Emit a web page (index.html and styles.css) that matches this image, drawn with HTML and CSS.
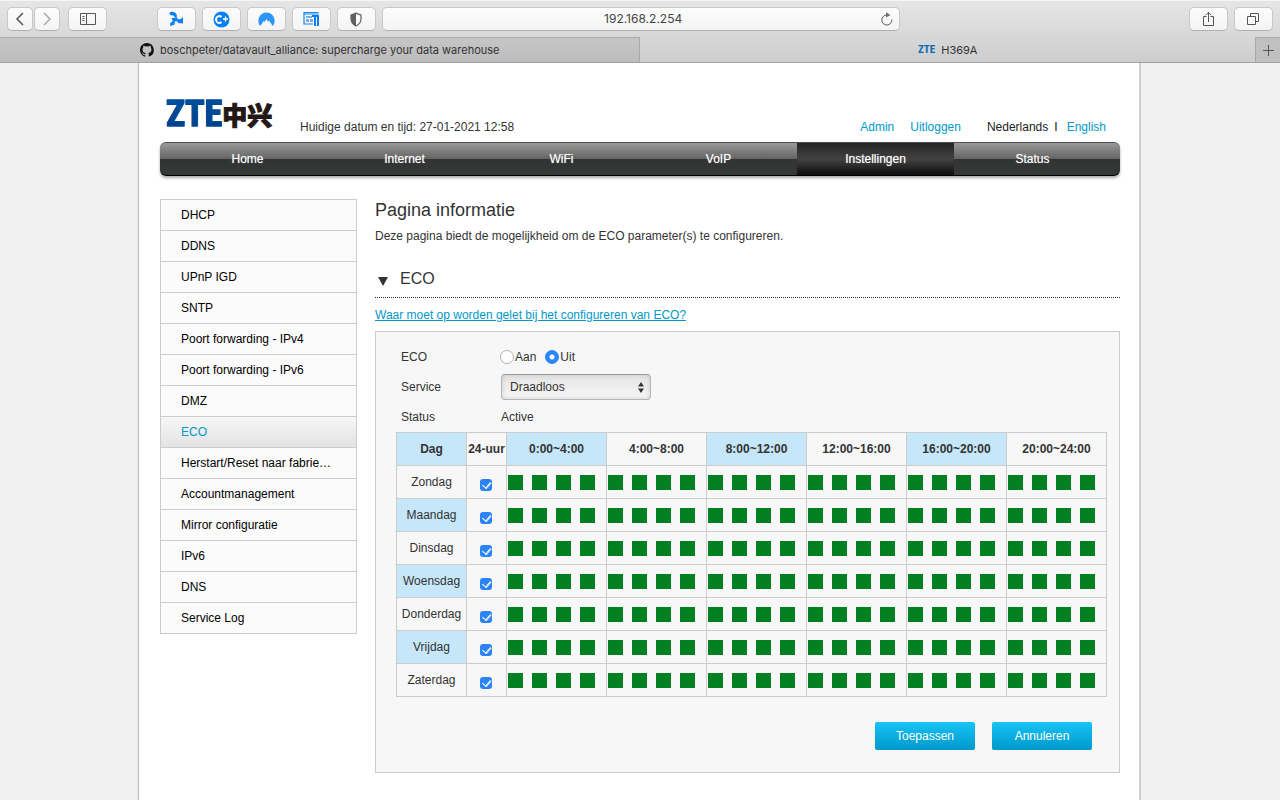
FILE: index.html
```html
<!DOCTYPE html>
<html lang="nl">
<head>
<meta charset="utf-8">
<meta name="viewport" content="width=device-width, initial-scale=1">
<title>H369A</title>
<link rel="stylesheet" href="styles.css">
</head>
<body>
<div class="browser">
  <div class="toolbar">
    <div class="pair">
      <button class="tool tool-small" type="button" aria-label="Back"><svg width="20" height="20" viewBox="0 0 20 20"><path d="M13 4 7 10l6 6" class="line bold"/></svg></button>
      <button class="tool tool-small" type="button" aria-label="Forward"><svg width="20" height="20" viewBox="0 0 20 20"><path d="m7 4 6 6-6 6" class="line bold faded"/></svg></button>
    </div>
    <button class="tool" type="button" aria-label="Sidebar"><svg width="16" height="13" viewBox="0 0 16 13"><path d="M.5.5h15v11H.5zM6.500.5v11M2.500 3.500h2M2.500 5.500h2M2.500 7.500h2" class="line"/></svg></button>
    <div class="space-left"></div>
    <div class="extensions">
      <button class="tool" type="button" aria-label="Pinwheel"><svg width="16" height="16" viewBox="0 0 16 16"><path d="M1.500 1.500C3.500.3 6 .5 8 2.500c.8 1 1 2.500.8 4.300L7 6.500 5.500 4.500 2 4z"/><path d="M15 6v6.500l-4.500-.5-2.500-2.500 2-1.500 2.500.2z"/><path d="M3.500 7 7 6.800l1.500 2L6.500 11l.3 2.500L2 15l.3-3 2.500-2z"/><path d="m7 7 2.500-.5L9 10l-2.500.3z"/></svg></button>
      <button class="tool" type="button" aria-label="Coupons"><svg width="17" height="17" viewBox="0 0 17 17"><circle cx="8.500" cy="8.500" r="8"/><path d="M8.500 6a3.300 3.300 0 1 0 0 5" fill="none" stroke="#fff" stroke-width="1.800"/><path d="M10 8h5M12.500 5.500v5" stroke="#fff" stroke-width="1.300"/></svg></button>
      <button class="tool" type="button" aria-label="VPN"><svg width="17" height="15" viewBox="0 0 17 15"><path d="M2.300 14A8.200 8.200 0 1 1 14.700 14L11 8.500l-1 1.200L8.500 7l-2 3-.8-1z" fill="#2e96f7"/></svg></button>
      <button class="tool" type="button" aria-label="Reader"><svg width="17" height="16" viewBox="0 0 17 16"><path d="M.5 1.500h15M1 1v12h9M1 3h14.500" fill="none" stroke="#1685f2" stroke-width="1.200"/><path d="M3 5h6v2H3zM3 8h3v3H3zM7 8h3v3H7z" fill="#79b0df"/><path d="M9 4h7v2H9zM11 5h2v10h-2zM14 5h2v10h-2z"/></svg></button>
      <button class="tool" type="button" aria-label="Privacy"><svg width="14" height="15" viewBox="0 0 14 15"><path d="M7 1c2 1.300 3.500 1.500 5 2v4c0 3.500-2 5.500-5 7-3-1.500-5-3.500-5-7V3c1.500-.5 3-.7 5-2z" fill="none" stroke="#606060" stroke-width="1.200"/><path d="M7 1v13c-3-1.500-5-3.500-5-7V3c1.500-.5 3-.7 5-2z" fill="#606060"/></svg></button>
    </div>
    <div class="address">
      <input class="address-input" type="text" value="192.168.2.254" aria-label="Address">
      <button class="reload" type="button" aria-label="Reload"><svg width="14" height="15" viewBox="0 0 14 15"><path d="M6.500 3a5 5 0 1 0 5.300 4.500" class="line"/><path d="M6 .3 10.500 3 6 5.600z" fill="#707070"/></svg></button>
    </div>
    <div class="space-right"></div>
    <div class="extensions">
      <button class="tool" type="button" aria-label="Share"><svg width="14" height="16" viewBox="0 0 14 16"><path d="M4.500 5.500h-3v9h10v-9h-3M6.500 11V1.500M3.700 4.200 6.500 1.400l2.800 2.800" class="line"/></svg></button>
      <button class="tool" type="button" aria-label="Tabs"><svg width="15" height="14" viewBox="0 0 15 14"><path d="M1.500 4.500h8v8h-8zM4.500 4V1.500h8v8H10" class="line"/></svg></button>
    </div>
  </div>
  <div class="tabs">
    <a class="tab tab-idle" href="#"><svg width="14" height="14" viewBox="0 0 16 16"><path fill="#111" d="M8 0C3.600 0 0 3.600 0 8c0 3.500 2.300 6.500 5.500 7.600.4.100.5-.2.500-.4v-1.400c-2.200.5-2.700-1-2.700-1-.4-.9-.9-1.200-.9-1.200-.7-.5.1-.5.1-.5.800.1 1.200.8 1.200.8.700 1.200 1.900.9 2.300.7.100-.5.300-.9.500-1.100-1.800-.2-3.600-.9-3.600-4 0-.9.300-1.600.8-2.100-.1-.2-.4-1 .1-2.100 0 0 .7-.2 2.200.8a7.600 7.600 0 0 1 4 0c1.500-1 2.200-.8 2.200-.8.400 1.100.2 1.900.1 2.100.5.600.8 1.300.8 2.100 0 3.100-1.900 3.700-3.700 3.900.3.300.6.800.6 1.500v2.200c0 .2.100.5.500.4A8 8 0 0 0 8 0z"/></svg>boschpeter/datavault_alliance: supercharge your data warehouse</a>
    <a class="tab" href="#"><span class="favicon">ZTE</span>H369A</a>
    <button class="new-tab" type="button" aria-label="New tab"><svg width="13" height="13" viewBox="0 0 13 13"><path d="M6.500 1v11M1 6.500h11" class="line"/></svg></button>
  </div>
</div>

<div class="page">
  <header class="header">
    <div class="logo"><span class="logo-latin">ZTE</span><span class="logo-cjk" lang="zh">中兴</span></div>
    <div class="clock">Huidige datum en tijd: 27-01-2021 12:58</div>
    <div class="account"><a class="link" href="#">Admin</a><a class="link" href="#">Uitloggen</a></div>
    <div class="language"><span>Nederlands</span><span>I</span><a class="link" href="#">English</a></div>
  </header>
  <nav class="nav">
    <a class="nav-item" href="#">Home</a>
    <a class="nav-item" href="#">Internet</a>
    <a class="nav-item" href="#">WiFi</a>
    <a class="nav-item" href="#">VoIP</a>
    <a class="nav-item nav-current" href="#">Instellingen</a>
    <a class="nav-item" href="#">Status</a>
  </nav>
  <div class="columns">
    <nav class="side">
      <a class="side-item" href="#">DHCP</a>
      <a class="side-item" href="#">DDNS</a>
      <a class="side-item" href="#">UPnP IGD</a>
      <a class="side-item" href="#">SNTP</a>
      <a class="side-item" href="#">Poort forwarding - IPv4</a>
      <a class="side-item" href="#">Poort forwarding - IPv6</a>
      <a class="side-item" href="#">DMZ</a>
      <a class="side-item side-current" href="#">ECO</a>
      <a class="side-item" href="#">Herstart/Reset naar fabrie…</a>
      <a class="side-item" href="#">Accountmanagement</a>
      <a class="side-item" href="#">Mirror configuratie</a>
      <a class="side-item" href="#">IPv6</a>
      <a class="side-item" href="#">DNS</a>
      <a class="side-item" href="#">Service Log</a>
    </nav>
    <main class="main">
      <h1 class="title">Pagina informatie</h1>
      <p class="intro">Deze pagina biedt de mogelijkheid om de ECO parameter(s) te configureren.</p>
      <h2 class="section"><svg width="10" height="9" viewBox="0 0 10 9"><path d="M0 0h10L5 9z" fill="#333"/></svg>ECO</h2>
      <a class="link help" href="#">Waar moet op worden gelet bij het configureren van ECO?</a>
      <form class="panel">
        <div class="field">
          <span class="label">ECO</span>
          <label class="choice"><input class="radio" type="radio" name="eco">Aan</label>
          <label class="choice"><input class="radio" type="radio" name="eco" checked>Uit</label>
        </div>
        <div class="field">
          <label class="label" for="service">Service</label>
          <div class="select-box">
            <select class="select" id="service"><option>Draadloos</option></select>
            <svg class="select-arrows" width="6" height="11" viewBox="0 0 6 11"><path d="M0 4.500h6L3 0zM0 6.500h6L3 11z" fill="#333"/></svg>
          </div>
        </div>
        <div class="field"><span class="label">Status</span><span class="status">Active</span></div>
        <table class="schedule">
          <colgroup><col class="col-day"><col class="col-all"><col span="6"></colgroup>
          <thead><tr><th>Dag</th><th>24-uur</th><th>0:00~4:00</th><th>4:00~8:00</th><th>8:00~12:00</th><th>12:00~16:00</th><th>16:00~20:00</th><th>20:00~24:00</th></tr></thead>
          <tbody id="days"></tbody>
        </table>
        <div class="actions"><button class="action" type="button">Toepassen</button><button class="action" type="button">Annuleren</button></div>
      </form>
    </main>
  </div>
</div>
<script src="script.js"></script>
</body>
</html>
```
FILE: styles.css
```css
* { box-sizing: border-box; }
body {
  margin: 0;
  min-height: 100vh;
  display: flex;
  flex-direction: column;
  background: #f1f1f1;
  color: #333;
  font: 12px/16px "Liberation Sans", Arial, sans-serif;
}
a { text-decoration: none; color: inherit; }
button, input, select { font: inherit; color: inherit; margin: 0; padding: 0; border: 0; }

/* Browser bar */
.browser {
  background: linear-gradient(#e6e6e6, #cdcdcd);
  border-top: 1px solid #f5f5f5;
  border-bottom: 1px solid #a3a3a3;
  font-family: Inter, "Liberation Sans", sans-serif;
}
.toolbar { display: flex; align-items: center; height: 36px; padding: 0 7px; }
.pair { display: flex; gap: 1px; margin-right: 8px; }
.extensions { display: flex; gap: 6px; }
.space-left { flex: 50 1 0; }
.space-right { flex: 289 1 0; }
.tool, .address {
  display: flex;
  align-items: center;
  justify-content: center;
  width: 39px;
  height: 24px;
  border: 1px solid #c8c8c8;
  border-bottom-color: #b0b0b0;
  border-radius: 5px;
  background: linear-gradient(#fcfcfc, #f4f4f4);
}
.tool svg { fill: #0a7ff5; }
.tool-small { width: 26px; }
.line { fill: none; stroke: #555; stroke-width: 1; }
.bold { stroke-width: 1.5; }
.faded { stroke: #aaa; }
.address { flex: 489 1 0; margin-left: 6px; padding: 0 5px 0 23px; }
.address-input { flex: 1; min-width: 0; background: none; text-align: center; color: #444; }
.reload { display: flex; background: none; }
.tabs { display: flex; height: 25px; font-size: 11px; color: #333; }
.tab { flex: 640 1 0; display: flex; align-items: center; justify-content: center; gap: 6px; min-width: 0; }
.tab + .tab { flex-grow: 615; }
.tab-idle { background: linear-gradient(#c6c6c6, #bcbcbc); border: solid #a9a9a9; border-width: 1px 1px 0 0; }
.favicon { color: #0867b2; font: bold 11px "Liberation Sans Narrow", "Roboto Condensed", "DejaVu Sans Condensed", sans-serif; }
.new-tab { width: 25px; display: flex; align-items: center; justify-content: center; background: #c0c0c0; border: solid #a9a9a9; border-width: 1px 0 0 1px; }

/* Router page */
.page {
  flex: 1;
  width: 100%;
  max-width: 1002px;
  margin: 0 auto;
  padding: 0 19px 27px 21px;
  background: #fff;
  border-right: 2px solid #cfcfcf;
  box-shadow: -1px 0 1px #bbb;
  clip-path: inset(0 -4px);
}
.header { display: flex; align-items: flex-end; height: 79px; padding: 0 14px 7px 6px; }
.logo { display: flex; align-items: center; width: 134px; height: 42px; }
.logo-latin {
  font: bold 36px/42px "Liberation Sans Narrow", "Roboto Condensed", "DejaVu Sans Condensed", sans-serif;
  background: linear-gradient(#0057a5, #00387f);
  background-clip: text;
  color: transparent;
  -webkit-text-stroke: 1px #00489a;
}
.logo-cjk { font: 900 25px/42px "Noto Sans CJK SC", sans-serif; color: #231815; -webkit-text-stroke: 1px #231815; }
.clock { flex: 1; }
.account, .language { display: flex; }
.account { gap: 16px; margin-right: 26px; }
.language { gap: 6px; color: #222; }
.language .link { margin-left: 3px; }
.link { color: #0099c8; }
.nav {
  display: flex;
  height: 34px;
  padding: 0 9px;
  border: solid #4b4f4d;
  border-width: 1px 0;
  border-bottom-color: #000;
  border-radius: 6px;
  background: linear-gradient(#999 0, #636363 50%, #303332 51%, #363938 100%);
  box-shadow: 0 2px 3px #aaa;
  color: #fff;
}
.nav-item { flex: 1; text-align: center; line-height: 32px; text-shadow: 0 0 1px #aaa; }
.nav-current { background: linear-gradient(#242424, #424242 50%, #0d0d0d); }
.columns { display: flex; align-items: flex-start; gap: 18px; margin-top: 23px; }
.side { flex: none; width: 197px; border: 1px solid #ccc; background: #fbfbfb; color: #000; }
.side-item { display: block; height: 31px; padding: 0 20px; line-height: 30px; border-bottom: 1px solid #ccc; white-space: nowrap; }
.side-item:last-child { height: 30px; border-bottom: 0; }
.side-current { color: #0099c8; background: linear-gradient(#f7f7f7, #e3e3e3); }
.main { flex: 1; min-width: 0; }
.title { margin: 0; font-size: 18px; line-height: 22px; font-weight: normal; }
.intro { margin: 6px 0 24px; line-height: 18px; }
.section { display: flex; align-items: center; gap: 12px; margin: 0 0 8px; padding: 0 3px 8px; border-bottom: 1px dotted #333; font-size: 16px; line-height: 20px; font-weight: normal; height: 29px; }
.section svg { margin-top: 5px; }
.help { display: block; line-height: 18px; text-decoration: underline; margin-bottom: 7px; }

/* ECO form */
.panel { padding: 10px 12px 22px 20px; border: 1px solid #ccc; background: #f7f7f7; }
.field { display: flex; align-items: center; height: 30px; padding-left: 5px; }
.label { width: 100px; }
.choice { display: flex; align-items: center; gap: 1px; margin: 0 9px 0 -1px; }
.choice + .choice { margin-left: 0; }
.radio, .check { appearance: none; flex: none; display: grid; place-items: center; }
.radio { width: 14px; height: 14px; border: 1px solid #b3b3b3; border-radius: 50%; background: #fff; }
.radio:checked { border-color: #2683f5; background: radial-gradient(#fff 2px, #2b86f8 3px); }
.select-box { position: relative; width: 150px; }
.select {
  appearance: none;
  display: block;
  width: 100%;
  height: 26px;
  padding-left: 8px;
  border: 1px solid #b5b5b5;
  border-top-color: #9a9a9a;
  border-radius: 4px;
  background: linear-gradient(#e3e3e3, #f8f8f8);
  box-shadow: inset 0 0 5px #ccc;
}
.select-arrows { position: absolute; right: 7px; top: 8px; pointer-events: none; }
.schedule { width: 100%; max-width: 711px; border-collapse: collapse; table-layout: fixed; }
.col-day { width: 70px; }
.col-all { width: 40px; }
.schedule th, .schedule td { height: 33px; padding: 0; border: 1px solid #ccc; text-align: center; white-space: nowrap; }
.schedule th { font-weight: bold; }
.schedule thead th:nth-child(odd), .schedule tbody tr:nth-child(even) th { background: #c6e6fa; }
.schedule tbody th { font-weight: normal; }
.check { width: 12px; height: 12px; margin: 6px 14px 0 13px; border-radius: 3px; background: #2b83f6; }
.check:checked::after { content: ""; width: 4px; height: 7px; margin-top: -2px; border: solid #fff; border-width: 0 1px 1px 0; box-shadow: 1px 0 0 -0px #b9d7fc; transform: rotate(40deg); }
.hours { display: flex; gap: 9px; padding-left: 1px; }
.hour { width: 15px; height: 15px; background: #008020; }
.actions { display: flex; justify-content: flex-end; gap: 17px; margin-top: 25px; padding-right: 15px; }
.action { width: 100px; height: 28px; border-radius: 2px; background: linear-gradient(#17c3f5, #0098cb); color: #fff; }
```
FILE: script.js
```javascript
const days = ["Zondag", "Maandag", "Dinsdag", "Woensdag", "Donderdag", "Vrijdag", "Zaterdag"];
const block = '<td><div class="hours">' + '<span class="hour"></span>'.repeat(4) + "</div></td>";

document.getElementById("days").innerHTML = days.map((day) =>
  `<tr><th scope="row">${day}</th>` +
  `<td><input class="check" type="checkbox" aria-label="${day} 24-uur" checked></td>` +
  block.repeat(6) + "</tr>"
).join("");
```
